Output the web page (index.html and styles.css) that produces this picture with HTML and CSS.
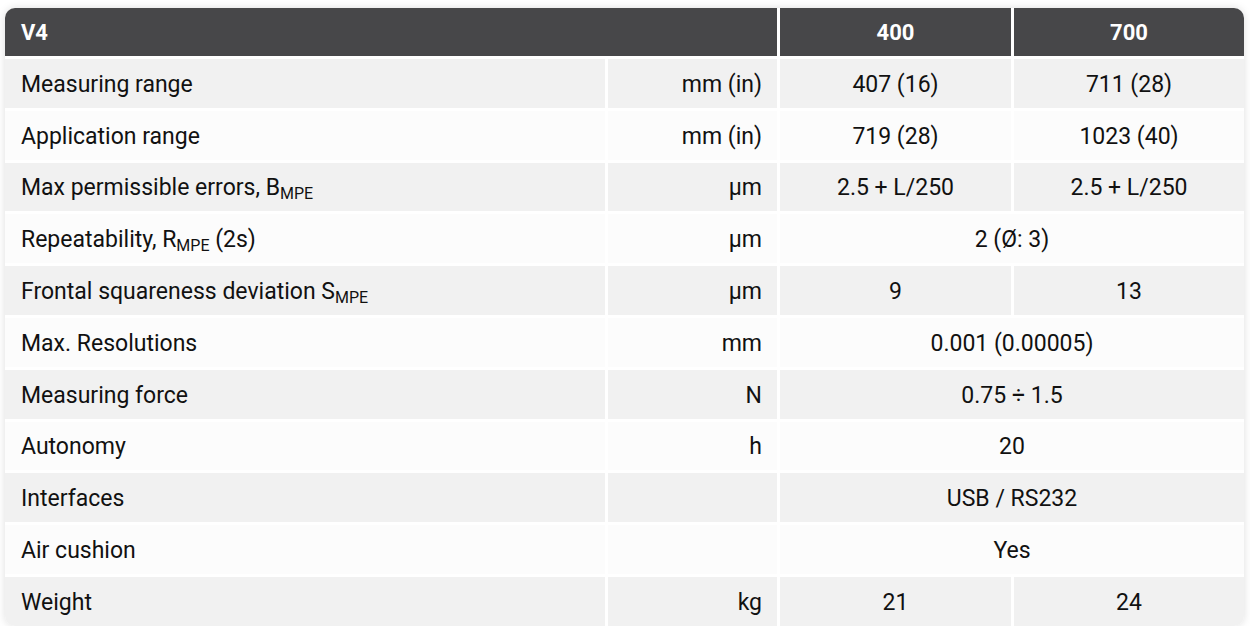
FILE: index.html
```html
<!DOCTYPE html>
<html lang="en">
<head>
<meta charset="utf-8">
<title>V4 specifications</title>
<link rel="stylesheet" href="styles.css">
</head>
<body>
<div class="spec">
  <div class="hd hd-name">V4</div>
  <div class="hd hd-val">400</div>
  <div class="hd hd-val">700</div>

  <div class="c lbl odd"><span>Measuring range</span></div>
  <div class="c unit odd">mm (in)</div>
  <div class="c val odd">407 (16)</div>
  <div class="c val odd">711 (28)</div>

  <div class="c lbl"><span>Application range</span></div>
  <div class="c unit">mm (in)</div>
  <div class="c val">719 (28)</div>
  <div class="c val">1023 (40)</div>

  <div class="c lbl odd"><span>Max permissible errors, B<sub>MPE</sub></span></div>
  <div class="c unit odd">µm</div>
  <div class="c val odd">2.5 + L/250</div>
  <div class="c val odd">2.5 + L/250</div>

  <div class="c lbl"><span>Repeatability, R<sub>MPE</sub> (2s)</span></div>
  <div class="c unit">µm</div>
  <div class="c val span">2 (Ø: 3)</div>

  <div class="c lbl odd"><span>Frontal squareness deviation S<sub>MPE</sub></span></div>
  <div class="c unit odd">µm</div>
  <div class="c val odd">9</div>
  <div class="c val odd">13</div>

  <div class="c lbl"><span>Max. Resolutions</span></div>
  <div class="c unit">mm</div>
  <div class="c val span">0.001 (0.00005)</div>

  <div class="c lbl odd"><span>Measuring force</span></div>
  <div class="c unit odd">N</div>
  <div class="c val span odd">0.75 ÷ 1.5</div>

  <div class="c lbl"><span>Autonomy</span></div>
  <div class="c unit">h</div>
  <div class="c val span">20</div>

  <div class="c lbl odd"><span>Interfaces</span></div>
  <div class="c unit odd"></div>
  <div class="c val span odd">USB / RS232</div>

  <div class="c lbl"><span>Air cushion</span></div>
  <div class="c unit"></div>
  <div class="c val span">Yes</div>

  <div class="c lbl odd"><span>Weight</span></div>
  <div class="c unit odd">kg</div>
  <div class="c val odd">21</div>
  <div class="c val odd">24</div>
</div>
</body>
</html>
```
FILE: styles.css
```css
html, body {
  margin: 0;
  padding: 0;
  background: #ffffff;
}
body {
  padding: 8px 6px 0 5px;
  font-family: Roboto, "Liberation Sans", Arial, sans-serif;
  color: #111111;
}
.spec {
  display: grid;
  grid-template-columns: 600px 169px 231px 230px;
  grid-template-rows: 48px;
  grid-auto-rows: 48.8px;
  gap: 3px;
  width: 1239px;
  background: #ffffff;
  border-radius: 10px;
  overflow: hidden;
  box-shadow: 0 0 8px rgba(0, 0, 0, 0.13);
}
.hd {
  background: #474749;
  color: #ffffff;
  font-weight: 700;
  font-size: 22px;
  display: flex;
  align-items: center;
}
.hd-name {
  grid-column: span 2;
  padding-left: 16px;
}
.hd-val {
  justify-content: center;
}
.c {
  background: #fcfcfc;
  font-size: 23px;
  display: flex;
  align-items: center;
  white-space: nowrap;
  padding-top: 2px;
}
.c.odd {
  background: #f1f1f1;
}
.lbl {
  padding-left: 16px;
}
.unit {
  justify-content: flex-end;
  padding-right: 15px;
}
.val {
  justify-content: center;
}
.span {
  grid-column: span 2;
}
sub {
  font-size: 16px;
  vertical-align: -4px;
  line-height: 0;
}
```
